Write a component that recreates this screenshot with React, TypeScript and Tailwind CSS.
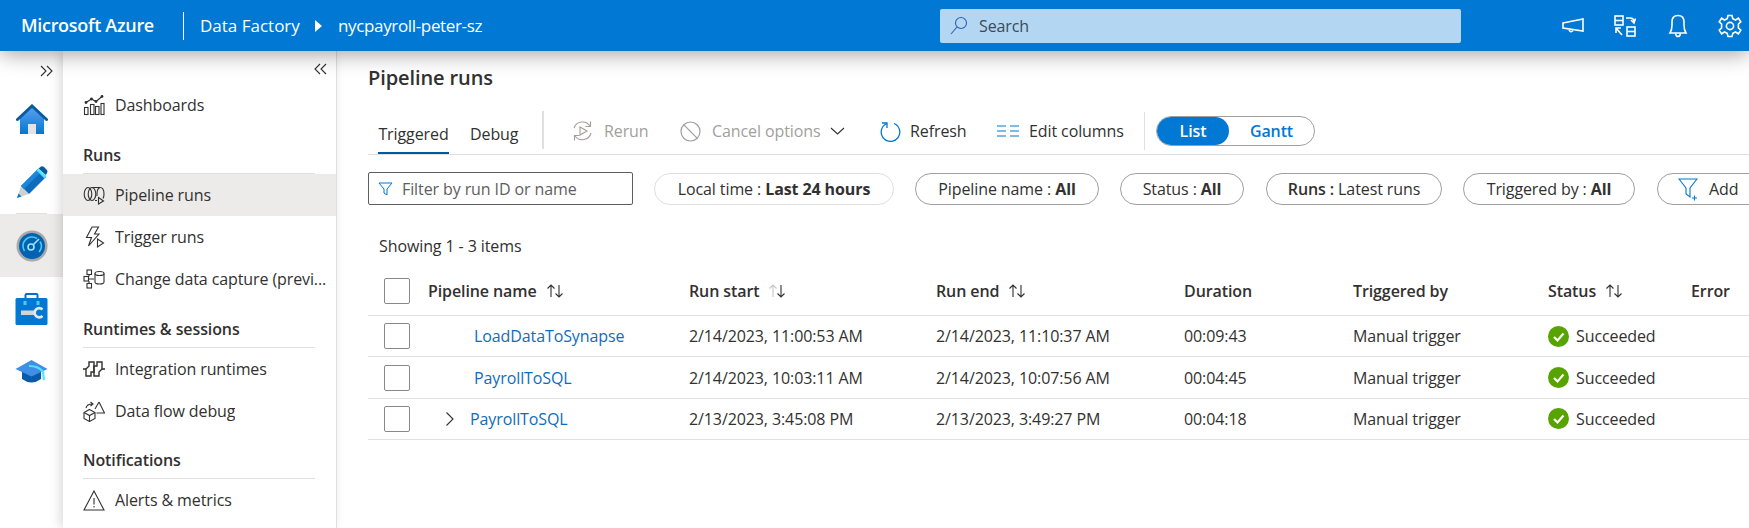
import React from "react";

const S = ({ w, h, children, className = "" }: { w: number; h: number; children: React.ReactNode; className?: string }) => (
  <svg width={w} height={h} viewBox={`0 0 ${w} ${h}`} fill="none" className={`shrink-0 ${className}`}>
    {children}
  </svg>
);

const line = { stroke: "currentColor", strokeWidth: 1.1, fill: "none" } as const;

const HomeIcon = () => (
  <S w={32} h={31}>
    <defs>
      <linearGradient id="hg" x1="0" y1="0" x2="0" y2="1">
        <stop offset="0" stopColor="#5ea0ef" />
        <stop offset="1" stopColor="#0078d4" />
      </linearGradient>
    </defs>
    <path d="M16 3 L28 14 V30 H4 V14 Z" fill="url(#hg)" />
    <path d="M1.5 15.5 L16 2 L30.5 15.5" stroke="#0a5a9e" strokeWidth="3" strokeLinecap="round" />
    <rect x="12" y="20" width="8" height="10" fill="#e3e3e3" />
  </S>
);
const PencilIcon = () => (
  <S w={32} h={33}>
    <path d="M1 32 L5 20 L13 28 Z" fill="#d0d0d0" />
    <path d="M1 32 L2.5 27.5 L5.5 30.5 Z" fill="#0078d4" />
    <path d="M5 20 L22 3 L30 11 L13 28 Z" fill="#0f6cbd" />
    <path d="M5 20 L22 3 L25 6 L8 23 Z" fill="#1a86dc" />
    <path d="M22.5 2.5 L25 0.5 Q26.5 0 28 1 L31 4 Q32 5.5 31 7 L29.8 9 Z" fill="#0a5a9e" />
    <path d="M20.5 4.5 L22.5 2.5 L30.5 10 L28.5 12.5 Z" fill="#50e6ff" />
  </S>
);
const MonitorIcon = () => (
  <S w={32} h={32}>
    <circle cx="16" cy="16" r="15.5" fill="#a8a8a8" />
    <circle cx="16" cy="16" r="13" fill="#0063b1" />
    <path d="M8.5 21 A9 9 0 0 1 21 8.5" stroke="#50c8f0" strokeWidth="1.6" />
    <path d="M24 11.5 A9 9 0 0 1 23 22" stroke="#50c8f0" strokeWidth="1.6" />
    <circle cx="15" cy="17" r="3" stroke="#9fe6ff" strokeWidth="1.6" />
    <path d="M17 15 L23 9" stroke="#9fe6ff" strokeWidth="1.6" />
  </S>
);
const ToolboxIcon = () => (
  <S w={33} h={32}>
    <path d="M10.5 6 V2 Q10.5 1 11.5 1 H21.5 Q22.5 1 22.5 2 V6" stroke="#0a6fc4" strokeWidth="2" />
    <rect x="0.5" y="5" width="32" height="27" rx="1.5" fill="#0078d4" />
    <rect x="8.5" y="8" width="3" height="4" fill="#50c8f0" />
    <rect x="21.5" y="8" width="3" height="4" fill="#50c8f0" />
    <rect x="6" y="17.5" width="15" height="4.5" fill="#d4d4d4" />
    <path d="M27.5 16.5 A4.6 4.6 0 1 0 27.5 23" stroke="#e6e6e6" strokeWidth="2.6" />
  </S>
);
const HatIcon = () => (
  <S w={33} h={25}>
    <path d="M7 10 V20 Q16.5 27 26 20 V10 Z" fill="#0a5aaa" />
    <path d="M0.5 10 L16.5 1 L32.5 10 L16.5 17.5 Z" fill="#3f8fe6" />
    <path d="M14 7 Q24 7 28 13 L29 21" stroke="#50e6ff" strokeWidth="2.2" />
  </S>
);

const Dashboards = () => (
  <S w={22} h={22} className="text-[#323130]">
    <g {...line}>
      <rect x="1.5" y="13.5" width="3.5" height="7" />
      <rect x="7.5" y="10.5" width="3.5" height="10" />
      <rect x="12.5" y="12.5" width="3.5" height="8" />
      <rect x="18" y="9.5" width="3" height="11" />
      <path d="M3 8.5 L8.5 5 L13 7.5 L19 2.5" />
    </g>
    <g fill="#323130">
      <circle cx="3" cy="8.5" r="1.4" />
      <circle cx="8.5" cy="5" r="1.4" />
      <circle cx="13" cy="7.5" r="1.4" />
      <circle cx="19" cy="2.5" r="1.4" />
    </g>
  </S>
);
const PipelineRuns = () => (
  <S w={22} h={20} className="text-[#323130]">
    <g {...line}>
      <ellipse cx="5" cy="9" rx="3.8" ry="6.5" />
      <ellipse cx="9" cy="9" rx="3.8" ry="6.5" />
      <path d="M9 2.5 H17 Q21 2.5 21 9 Q21 12 20 13.5 M12 15.5 H14" />
      <path d="M17 2.5 Q14 3.5 14 9 V11" />
      <path d="M15.5 12.5 L20.5 16 L15.5 19 Z" />
    </g>
  </S>
);
const TriggerRuns = () => (
  <S w={22} h={23} className="text-[#323130]">
    <g {...line}>
      <path d="M9 1 H15.5 L11.5 8 H16 L5.5 20 L8.5 11.5 H3.5 Z" />
      <path d="M14.5 13 L20.5 17 L14.5 21 Z" />
    </g>
  </S>
);
const ChangeData = () => (
  <S w={22} h={20} className="text-[#323130]">
    <g {...line}>
      <rect x="4" y="1" width="4.5" height="4.5" />
      <rect x="1" y="7.5" width="4.5" height="4.5" />
      <rect x="4" y="14.5" width="4.5" height="4.5" />
      <path d="M6 5.5 V7.5 M5.5 10 H11 M6 12 V14.5" />
      <ellipse cx="16.5" cy="4.5" rx="4.5" ry="2" />
      <path d="M12 4.5 V13 Q12 15 16.5 15 Q21 15 21 13 V4.5" />
    </g>
  </S>
);
const Integration = () => (
  <S w={22} h={16} className="text-[#323130]">
    <g {...line} strokeWidth={1.4}>
      <path d="M0 8 H3 M19 8 H22" />
      <path d="M3 8 L6 5 V1 H11 V11 H8 V15 H3 Z" />
      <path d="M19 8 L16 11 V15 H11 V5 H14 V1 H19 Z" />
    </g>
  </S>
);
const DataFlow = () => (
  <S w={22} h={21} className="text-[#323130]">
    <g {...line}>
      <path d="M6.5 9 L12 12 V18 L6.5 21 L1 18 V12 Z" transform="translate(0,-0.5)" />
      <path d="M1 11.5 L6.5 14.5 L12 11.5 M6.5 14.5 V20.5" />
      <path d="M16 1 L21.5 12 H13.5" />
      <path d="M16 1 L12 8" />
      <path d="M3 7 Q4 3 9 3 M7.5 1 L10 3 L7.5 5" />
    </g>
  </S>
);
const Alert = () => (
  <S w={22} h={21} className="text-[#323130]">
    <g {...line}>
      <path d="M11 1 L21 20 H1 Z" />
      <path d="M11 8 V14.5 M11 16 V17.5" />
    </g>
  </S>
);

const NavRow = ({ icon, label, active }: { icon: React.ReactNode; label: string; active?: boolean }) => (
  <div className={`flex h-[42px] items-center pl-[20px] pr-1 ${active ? "bg-[#edebe9]" : ""}`}>
    <span className="flex w-[32px] shrink-0 items-center">{icon}</span>
    <span className="truncate whitespace-nowrap text-[#323130]">{label}</span>
  </div>
);
const NavHead = ({ label, h }: { label: string; h: string }) => (
  <div className={`${h} ml-[20px] mr-[21px] flex items-end border-b border-[#e1dfdd] pb-[6px] font-semibold text-[#323130]`}>{label}</div>
);

const RailItem = ({ children, active, ruled }: { children: React.ReactNode; active?: boolean; ruled?: boolean }) => (
  <div className={`relative flex h-[63px] items-center justify-center ${active ? "bg-[#edebe9]" : ""}`}>
    {ruled && <div className="absolute bottom-0 left-[16px] h-px w-[31px] bg-[#e1dfdd]" />}
    {children}
  </div>
);

const Pill = ({ className, children }: { className: string; children: React.ReactNode }) => (
  <div className={`flex h-[32px] shrink-0 items-center justify-center rounded-full border border-[#a19f9d] text-[#323130] ${className}`}>{children}</div>
);

const Sort = ({ faded }: { faded?: boolean }) => (
  <S w={20} h={16} className="ml-2 text-[#323130]">
    <g {...line}>
      <path d="M6 14 V2 M2.5 5.5 L6 2 L9.5 5.5" stroke={faded ? "#c8c6c4" : "currentColor"} />
      <path d="M14 2 V14 M10.5 10.5 L14 14 L17.5 10.5" />
    </g>
  </S>
);

const cols = "grid grid-cols-[60px_261px_247px_248px_169px_195px_143px_1fr] items-center border-b border-[#e1dfdd] text-[#323130]";

const Check = () => <div className="ml-4 h-[26px] w-[26px] rounded-[2px] border border-[#8a8886]" />;

const rows = [
  { name: "LoadDataToSynapse", start: "2/14/2023, 11:00:53 AM", end: "2/14/2023, 11:10:37 AM", dur: "00:09:43" },
  { name: "PayrollToSQL", start: "2/14/2023, 10:03:11 AM", end: "2/14/2023, 10:07:56 AM", dur: "00:04:45" },
  { name: "PayrollToSQL", start: "2/13/2023, 3:45:08 PM", end: "2/13/2023, 3:49:27 PM", dur: "00:04:18", exp: true },
];

const ToolBtn = ({ icon, label, className }: { icon: React.ReactNode; label: string; className: string }) => (
  <div className={`flex items-center ${className}`}>
    {icon}
    <span>{label}</span>
  </div>
);

export default function App() {
  return (
    <div className="flex h-[528px] w-[1749px] flex-col overflow-hidden bg-white text-[16px] font-['Open_Sans',sans-serif] tracking-[-0.1px]">
      <header className="relative z-20 flex h-[51px] shrink-0 items-center bg-[#0078d4] text-white shadow-[0_2px_22px_rgba(0,0,0,0.4)]">
        <div className="ml-[21px] w-[162px] text-[18px] font-semibold tracking-[-0.3px]">Microsoft Azure</div>
        <div className="h-[28px] w-px bg-white" />
        <div className="ml-[16px] w-[115px] text-[17px] tracking-normal">Data Factory</div>
        <S w={8} h={12}><path d="M0 0 L7 6 L0 12 Z" fill="#fff" /></S>
        <div className="ml-[15px] w-[602px] text-[17px] tracking-[-0.35px]">nycpayroll-peter-sz</div>
        <div className="flex h-[34px] w-[521px] items-center rounded-[2px] bg-[#b3d7f2] pl-[10px] text-[#323130]">
          <S w={18} h={20} className="text-[#2b5fb8]">
            <g {...line}>
              <circle cx="11" cy="7" r="5.5" />
              <path d="M7 11 L1 18" />
            </g>
          </S>
          <span className="ml-[11px] text-[#3b4a5a]">Search</span>
        </div>
        <div className="ml-[101px] flex items-center">
          <S w={22} h={16}>
            <g stroke="#fff" strokeWidth="1.6">
              <path d="M1 5 L21 1 V13 L1 10 Z" />
              <path d="M7 12 Q8.5 15 11 12.5" />
            </g>
          </S>
          <S w={22} h={22} className="ml-[30px]">
            <g stroke="#fff" strokeWidth="1.6">
              <rect x="1" y="1" width="8" height="9" />
              <path d="M1 5.5 H9" />
              <rect x="13" y="12" width="8" height="9" />
              <path d="M13 16.5 H21" />
              <path d="M12 3 H16 Q20 3 20 7 M17 5 L20 8 L21.5 3.5" />
              <path d="M2 13 L8 20 M2 18 V13 H7" />
            </g>
          </S>
          <S w={20} h={24} className="ml-[32px]">
            <g stroke="#fff" strokeWidth="1.6">
              <path d="M2 19 Q4 16 4 11 V8 Q4 1.5 10 1.5 Q16 1.5 16 8 V11 Q16 16 18 19 Z" />
              <path d="M7.5 19.5 Q8 22.5 10 22.5 Q12 22.5 12.5 19.5" />
            </g>
          </S>
          <S w={24} h={24} className="ml-[30px]">
            <g stroke="#fff" strokeWidth="1.6">
              <circle cx="12" cy="12" r="3.6" />
              <path d="M10 1.5 H14 L14.8 4.8 L17.5 6 L20.4 4.2 L22.8 7.8 L20.4 10 V14 L22.8 16.2 L20.4 19.8 L17.5 18 L14.8 19.2 L14 22.5 H10 L9.2 19.2 L6.5 18 L3.6 19.8 L1.2 16.2 L3.6 14 V10 L1.2 7.8 L3.6 4.2 L6.5 6 L9.2 4.8 Z" />
            </g>
          </S>
        </div>
      </header>

      <div className="flex min-h-0 flex-1">
        <aside className="w-[63px] shrink-0">
          <div className="flex h-[37px] items-end justify-end pb-[11px] pr-[10px] text-[#323130]">
            <S w={13} h={12}>
              <g {...line}><path d="M1 1 L6 6 L1 11 M7 1 L12 6 L7 11" /></g>
            </S>
          </div>
          <RailItem><HomeIcon /></RailItem>
          <RailItem ruled><PencilIcon /></RailItem>
          <RailItem active><MonitorIcon /></RailItem>
          <RailItem><ToolboxIcon /></RailItem>
          <RailItem><HatIcon /></RailItem>
        </aside>

        <nav className="relative z-10 flex w-[274px] shrink-0 flex-col border-r border-[#e1dfdd] bg-white shadow-[-3px_0_10px_rgba(0,0,0,0.14)]">
          <div className="flex h-[33px] items-center justify-end pr-[9px] pt-[2px] text-[#323130]">
            <S w={13} h={12}>
              <g {...line}><path d="M6 1 L1 6 L6 11 M12 1 L7 6 L12 11" /></g>
            </S>
          </div>
          <NavRow icon={<Dashboards />} label="Dashboards" />
          <NavHead label="Runs" h="h-[48px]" />
          <NavRow icon={<PipelineRuns />} label="Pipeline runs" active />
          <NavRow icon={<TriggerRuns />} label="Trigger runs" />
          <NavRow icon={<ChangeData />} label="Change data capture (previ..." />
          <NavHead label="Runtimes & sessions" h="h-[48px]" />
          <NavRow icon={<Integration />} label="Integration runtimes" />
          <NavRow icon={<DataFlow />} label="Data flow debug" />
          <NavHead label="Notifications" h="h-[47px]" />
          <NavRow icon={<Alert />} label="Alerts & metrics" />
        </nav>

        <main className="min-w-0 flex-1 overflow-hidden pl-[31px] pt-[12px]">
          <h1 className="h-[30px] text-[20px] font-semibold leading-[30px] text-[#323130]">Pipeline runs</h1>
          <div className="mt-[18px] flex h-[44px] items-center border-b border-[#e1dfdd] text-[#323130]">
            <div className="flex h-full w-[174px] items-end pl-[10px]">
              <div className="flex h-[34px] w-[71px] items-start justify-center whitespace-nowrap border-b-[2px] border-[#005a9e] pt-[2px]">Triggered</div>
              <div className="ml-[21px] flex h-[34px] items-start pt-[2px]">Debug</div>
            </div>
            <div className="mb-[5px] h-[38px] w-[2px] bg-[#e1dfdd]" />
            <div className="flex flex-1 items-center pb-[3px]">
              <ToolBtn
                className="ml-[28px] w-[108px] gap-[11px] text-[#a19f9d]"
                label="Rerun"
                icon={
                  <S w={21} h={22}>
                    <g stroke="#a19f9d" strokeWidth="1.1">
                      <path d="M2 8 A9 9 0 0 1 18 6 M19 13 A9 9 0 0 1 3 16" />
                      <path d="M18.5 1.5 V6.5 H13.5 M2.5 20.5 V15.5 H7.5" />
                      <path d="M8 7 L15 11 L8 15 Z" />
                    </g>
                  </S>
                }
              />
              <ToolBtn
                className="w-[200px] gap-[11px] text-[#a19f9d]"
                label="Cancel options"
                icon={
                  <S w={21} h={21}>
                    <g stroke="#a19f9d" strokeWidth="1.2">
                      <circle cx="10.5" cy="10.5" r="9.5" />
                      <path d="M3.7 3.7 L17.3 17.3" />
                    </g>
                  </S>
                }
              />
              <S w={15} h={8} className="-ml-[50px] mr-[35px]">
                <path d="M1 1 L7.5 7 L14 1" stroke="#323130" strokeWidth="1.1" />
              </S>
              <ToolBtn
                className="w-[117px] gap-[9px]"
                label="Refresh"
                icon={
                  <S w={21} h={22}>
                    <g stroke="#0078d4" strokeWidth="1.3">
                      <path d="M7 3.5 A9.3 9.3 0 1 0 14 3.5" />
                      <path d="M7 8 V3 H2" />
                    </g>
                  </S>
                }
              />
              <ToolBtn
                className="w-[147px] gap-[10px]"
                label="Edit columns"
                icon={
                  <S w={22} h={12}>
                    <path d="M0 1 H9 M13 1 H22 M0 6 H9 M13 6 H22 M0 11 H9 M13 11 H22" stroke="#0078d4" strokeWidth="1.1" />
                  </S>
                }
              />
              <div className="h-[38px] w-px bg-[#e1dfdd]" />
              <div className="ml-[11px] flex h-[30px] w-[159px] overflow-hidden rounded-full border border-[#a19f9d] font-semibold">
                <div className="flex w-[72px] items-center justify-center rounded-full bg-[#0078d4] text-white">List</div>
                <div className="flex flex-1 items-center justify-center text-[#0078d4]">Gantt</div>
              </div>
            </div>
          </div>

          <div className="mt-[17px] flex h-[33px] items-center whitespace-nowrap">
            <div className="flex h-[33px] w-[265px] shrink-0 items-center rounded-[2px] border border-[#605e5c] pl-[9px] text-[#605e5c]">
              <S w={15} h={15}>
                <path d="M1 2 H14 L9 8 V14 L6 12 V8 Z" stroke="#0078d4" strokeWidth="1" />
              </S>
              <span className="ml-[9px]">Filter by run ID or name</span>
            </div>
            <Pill className="ml-[21px] w-[240px] border-[#e1dfdd]"><span>Local time :&nbsp;</span><b className="font-bold">Last 24 hours</b></Pill>
            <Pill className="ml-[21px] w-[184px]"><span>Pipeline name :&nbsp;</span><b className="font-bold">All</b></Pill>
            <Pill className="ml-[21px] w-[124px]"><span>Status :&nbsp;</span><b className="font-bold">All</b></Pill>
            <Pill className="ml-[22px] w-[176px]"><b className="font-semibold">Runs :&nbsp;</b><span>Latest runs</span></Pill>
            <Pill className="ml-[21px] w-[172px]"><span>Triggered by :&nbsp;</span><b className="font-bold">All</b></Pill>
            <Pill className="ml-[22px] w-[120px] !justify-start pl-[20px]">
              <S w={20} h={24}>
                <g stroke="#0078d4" strokeWidth="1.1">
                  <path d="M1 2 H19 L12 11 V20 L8 17 V11 Z" />
                  <path d="M14 21 H19 M16.5 18.5 V23.5" />
                </g>
              </S>
              <span className="ml-[11px]">Add</span>
            </Pill>
          </div>

          <div className="mt-[30px] flex h-[22px] items-center pl-[11px] text-[#323130]">Showing 1 - 3 items</div>

          <div className={`mt-[13px] h-[46px] pb-[4px] ${cols} font-semibold`}>
            <Check />
            <div className="flex items-center">Pipeline name <Sort /></div>
            <div className="flex items-center">Run start <Sort faded /></div>
            <div className="flex items-center">Run end <Sort /></div>
            <div>Duration</div>
            <div>Triggered by</div>
            <div className="flex items-center">Status <Sort /></div>
            <div>Error</div>
          </div>
          {rows.map((r, i) => (
            <div key={i} className={`h-[41.4px] ${cols}`}>
              <Check />
              <div className="flex items-center text-[#0f6cbd]">
                {r.exp ? (
                  <>
                    <S w={10} h={16} className="ml-[17px] mr-[17px] text-[#323130]">
                      <path d="M1.5 1.5 L8 8 L1.5 14.5" stroke="currentColor" strokeWidth="1.1" />
                    </S>
                    <span className="-ml-[2px]">{r.name}</span>
                  </>
                ) : (
                  <span className="ml-[46px]">{r.name}</span>
                )}
              </div>
              <div>{r.start}</div>
              <div>{r.end}</div>
              <div>{r.dur}</div>
              <div>Manual trigger</div>
              <div className="flex items-center gap-[7px]">
                <S w={21} h={21}>
                  <circle cx="10.5" cy="10.5" r="10.5" fill="#57a300" />
                  <path d="M6 11 L9.5 14.5 L15.5 7.5" stroke="#fff" strokeWidth="2.2" />
                </S>
                <span>Succeeded</span>
              </div>
              <div />
            </div>
          ))}
        </main>
      </div>
    </div>
  );
}
